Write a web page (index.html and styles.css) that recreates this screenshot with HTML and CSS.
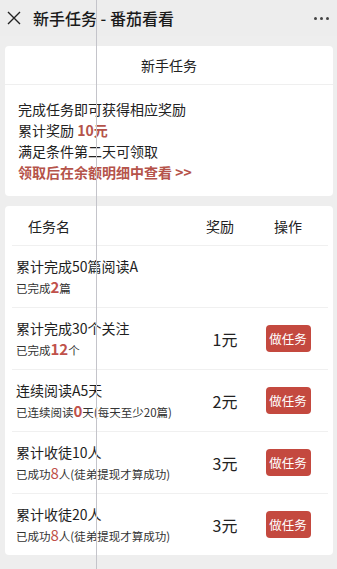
FILE: index.html
```html
<!DOCTYPE html>
<html lang="zh">
  <head>
    <meta charset="utf-8" />
    <link rel="stylesheet" href="styles.css">
  </head>
  <body>
    <!-- Barre du haut -->
    <div class="topbar">
      <svg class="close-icon" width="14" height="14" viewBox="0 0 14 14">
        <path d="M1 1 L13 13 M13 1 L1 13" stroke="#222" stroke-width="1.4" fill="none" />
      </svg>
      <span class="topbar-title">新手任务 - 番茄看看</span>
      <span class="topbar-more">
        <i></i><i></i><i></i>
      </span>
    </div>

    <div class="page">
      <div class="card intro">
        <div class="intro-title">新手任务</div>
        <div class="intro-body">
          <p>完成任务即可获得相应奖励</p>
          <p>累计奖励 <b class="red">10元</b></p>
          <p>满足条件第二天可领取</p>
          <p class="red link">领取后在余额明细中查看 &gt;&gt;</p>
        </div>
      </div>

      <div class="card tasks">
        <div class="task-head">
          <span class="col-name">任务名</span>
          <span class="col-reward">奖励</span>
          <span class="col-action">操作</span>
        </div>

        <div class="task-row">
          <div class="task-info">
            <div class="task-name">累计完成50篇阅读A</div>
            <div class="task-sub">已完成<b class="num">2</b>篇</div>
          </div>
          <div class="task-reward"></div>
          <div class="task-action"></div>
        </div>

        <div class="task-row">
          <div class="task-info">
            <div class="task-name">累计完成30个关注</div>
            <div class="task-sub">已完成<b class="num">12</b>个</div>
          </div>
          <div class="task-reward">1元</div>
          <div class="task-action"><button class="do-btn">做任务</button></div>
        </div>

        <div class="task-row">
          <div class="task-info">
            <div class="task-name">连续阅读A5天</div>
            <div class="task-sub">已连续阅读<b class="num">0</b>天(每天至少20篇)</div>
          </div>
          <div class="task-reward">2元</div>
          <div class="task-action"><button class="do-btn">做任务</button></div>
        </div>

        <div class="task-row">
          <div class="task-info">
            <div class="task-name">累计收徒10人</div>
            <div class="task-sub">已成功<span class="num">8</span>人(徒弟提现才算成功)</div>
          </div>
          <div class="task-reward">3元</div>
          <div class="task-action"><button class="do-btn">做任务</button></div>
        </div>

        <div class="task-row">
          <div class="task-info">
            <div class="task-name">累计收徒20人</div>
            <div class="task-sub">已成功<span class="num">8</span>人(徒弟提现才算成功)</div>
          </div>
          <div class="task-reward">3元</div>
          <div class="task-action"><button class="do-btn">做任务</button></div>
        </div>
      </div>
    </div>

    <div class="guide-line"></div>
  </body>
</html>
```

FILE: styles.css
```css
body {
  margin: 0;
  background: #eeeeee;
  font-family: "Noto Sans CJK SC", "Noto Sans", sans-serif;
  color: #222;
  font-size: 14px;
}

/* Barre du haut */
.topbar {
  height: 36px;
  display: flex;
  align-items: center;
  padding: 0 6px 0 7px;
  background: #ededed;
}

.close-icon {
  margin-right: 12px;
}

.topbar-title {
  flex: 1;
  font-size: 16px;
  font-weight: 500;
  color: #1a1a1a;
}

.topbar-more {
  display: flex;
  gap: 3px;
  margin-right: 2px;
}

.topbar-more i {
  width: 3px;
  height: 3px;
  border-radius: 50%;
  background: #444;
}

.page {
  padding: 10px 4px 0 5px;
}

.card {
  background: #fff;
  border-radius: 4px;
}

/* Carte d'intro */
.intro-title {
  height: 38px;
  display: flex;
  align-items: center;
  justify-content: center;
  border-bottom: 1px solid #efefef;
  font-size: 14px;
}

.intro-body {
  padding: 14px 13px 13px;
}

.intro-body p {
  margin: 0;
  line-height: 21px;
}

.red {
  color: #b5534a;
}

.link {
  font-weight: bold;
}

/* Liste des taches */
.tasks {
  margin-top: 10px;
  padding: 0 5px 0 7px;
}

.task-head {
  height: 39px;
  display: grid;
  grid-template-columns: 1fr 60px 52px;
  column-gap: 12px;
  align-items: center;
  padding-right: 14px;
  border-bottom: 1px solid #f0f0f0;
}

.col-name {
  padding-left: 16px;
}

.col-reward,
.col-action {
  text-align: center;
}

.task-row {
  display: grid;
  grid-template-columns: 1fr 60px 52px;
  column-gap: 12px;
  align-items: center;
  padding: 9px 14px 9px 4px;
  border-bottom: 1px solid #f0f0f0;
}

.task-row:last-child {
  border-bottom: none;
}

.task-info {
  min-width: 0;
}

.task-name {
  font-size: 14px;
  line-height: 22px;
  color: #1e1e1e;
}

.task-sub {
  font-size: 11.5px;
  line-height: 20px;
  color: #333;
  white-space: nowrap;
}

.num {
  color: #c0514a;
  font-size: 15px;
  font-weight: bold;
}

span.num {
  font-weight: normal;
}

.task-reward {
  font-size: 16px;
  text-align: center;
  padding-left: 10px;
}

.task-action {
  display: flex;
  justify-content: center;
}

.do-btn {
  width: 45px;
  height: 27px;
  padding: 0;
  border: none;
  border-radius: 4px;
  background: #c4493f;
  color: #fff;
  font-family: inherit;
  font-size: 12.5px;
}

/* Trait vertical du cliche */
.guide-line {
  position: fixed;
  top: 0;
  bottom: 0;
  left: 96px;
  width: 1px;
  background: #c4c4ca;
}
```
